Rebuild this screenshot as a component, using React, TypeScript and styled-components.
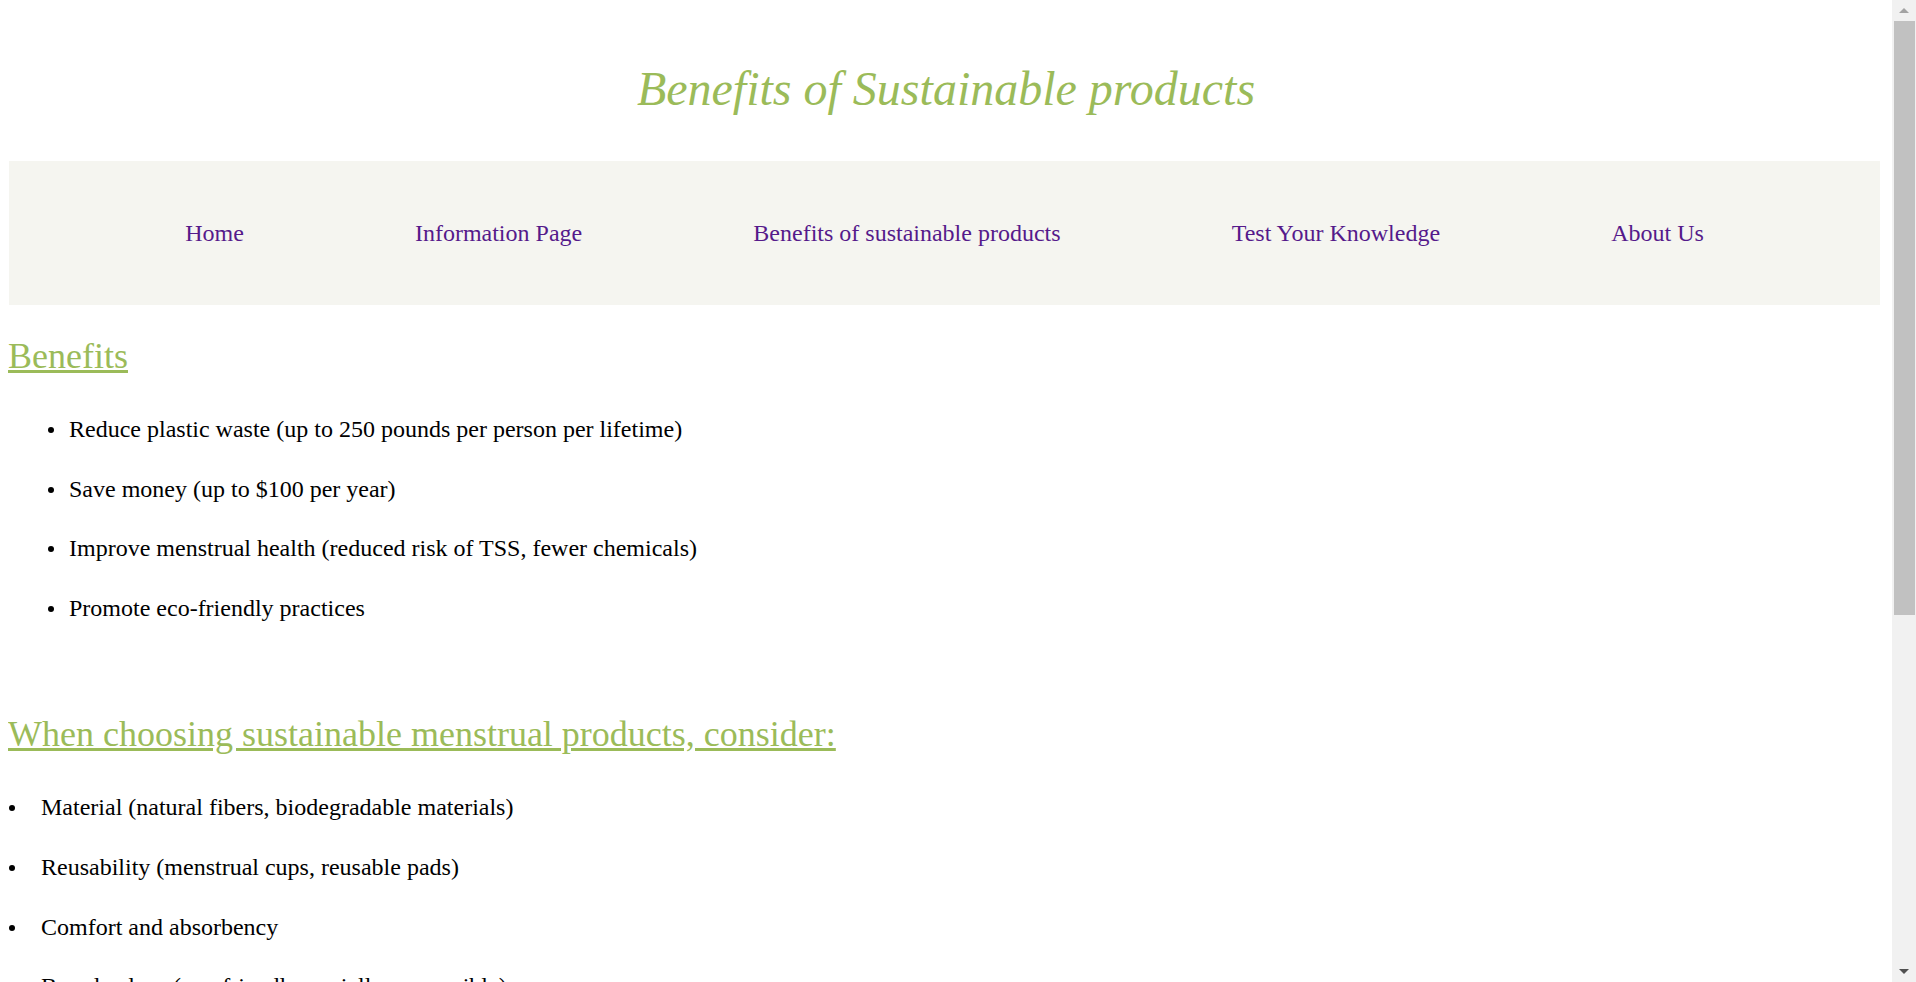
import React from "react";
import styled, { createGlobalStyle } from "styled-components";

const GlobalStyle = createGlobalStyle`
  html, body {
    background: #ffffff;
  }
  body {
    margin: 8px 32px 8px 8px;
    font-family: "Liberation Serif", "Times New Roman", serif;
    font-size: 24px;
    color: #000000;
  }
`;

const Page = styled.div`
  display: flex;
  flex-direction: column;
  padding-bottom: 550px;
`;

const Header = styled.header`
  padding: 53px 0 45px;
`;

const Title = styled.h1`
  margin: 0;
  text-align: center;
  font-size: 48px;
  font-style: italic;
  font-weight: normal;
  color: #9bbb59;
`;

const Nav = styled.nav`
  display: flex;
  justify-content: space-evenly;
  align-items: center;
  height: 144px;
  margin: 0 4px 0 1px;
  padding: 0 5px;
  background: #f5f5f0;
`;

const NavLink = styled.a`
  font-size: 24px;
  color: #551a8b;
  text-decoration: none;
`;

const Main = styled.main`
  display: flex;
  flex-direction: column;
  gap: 45px;
`;

const Section = styled.section`
  display: block;
`;

const SectionTitle = styled.h2`
  margin: 30px 0 23px;
  font-size: 36px;
  font-weight: normal;
  color: #9bbb59;
  text-decoration: underline;
  text-decoration-color: #9bbb59;
`;

const List = styled.ul<{ $indent: number }>`
  margin: 0;
  padding: 0 0 0 ${(p) => p.$indent}px;
  list-style: none;
`;

const Item = styled.li<{ $gap: number }>`
  display: flex;
  align-items: flex-start;
  padding: 16px 0;
  line-height: 27.6px;

  &::before {
    content: "";
    flex: none;
    width: 6px;
    height: 6px;
    margin: 11px ${(p) => p.$gap}px 0 0;
    border-radius: 50%;
    background: #000000;
  }
`;

/* Browser scrollbar as seen in the reference (window chrome, lies over the page edge) */
const ScrollTrack = styled.div`
  position: fixed;
  top: 0;
  right: 0;
  bottom: 0;
  width: 24px;
  background: #f1f1f1;
  display: flex;
  flex-direction: column;
`;

const ScrollButton = styled.div<{ $down?: boolean }>`
  flex: none;
  height: 21px;
  display: flex;
  align-items: center;
  justify-content: center;

  &::after {
    content: "";
    width: 0;
    height: 0;
    border-left: 5px solid transparent;
    border-right: 5px solid transparent;
    ${(p) =>
      p.$down
        ? "border-top: 5px solid #505050;"
        : "border-bottom: 5px solid #a3a3a3;"}
  }
`;

const ScrollThumb = styled.div`
  flex: none;
  height: 594px;
  margin: 0 1px 0 2px;
  background: #c1c1c1;
`;

const ScrollRest = styled.div`
  flex: 1;
`;

const navItems = [
  "Home",
  "Information Page",
  "Benefits of sustainable products",
  "Test Your Knowledge",
  "About Us",
];

const benefits = [
  "Reduce plastic waste (up to 250 pounds per person per lifetime)",
  "Save money (up to $100 per year)",
  "Improve menstrual health (reduced risk of TSS, fewer chemicals)",
  "Promote eco-friendly practices",
];

const considerations = [
  "Material (natural fibers, biodegradable materials)",
  "Reusability (menstrual cups, reusable pads)",
  "Comfort and absorbency",
  "Brand values (eco-friendly, socially responsible)",
];

export default function App() {
  return (
    <>
      <GlobalStyle />
      <Page>
        <Header>
          <Title>Benefits of Sustainable products</Title>
        </Header>
        <Nav>
          {navItems.map((n) => (
            <NavLink key={n} href="#">
              {n}
            </NavLink>
          ))}
        </Nav>
        <Main>
          <Section>
            <SectionTitle>Benefits</SectionTitle>
            <List $indent={40}>
              {benefits.map((b) => (
                <Item key={b} $gap={15}>
                  {b}
                </Item>
              ))}
            </List>
          </Section>
          <Section>
            <SectionTitle>When choosing sustainable menstrual products, consider:</SectionTitle>
            <List $indent={1}>
              {considerations.map((c) => (
                <Item key={c} $gap={26}>
                  {c}
                </Item>
              ))}
            </List>
          </Section>
        </Main>
      </Page>
      <ScrollTrack aria-hidden="true">
        <ScrollButton />
        <ScrollThumb />
        <ScrollRest />
        <ScrollButton $down />
      </ScrollTrack>
    </>
  );
}
